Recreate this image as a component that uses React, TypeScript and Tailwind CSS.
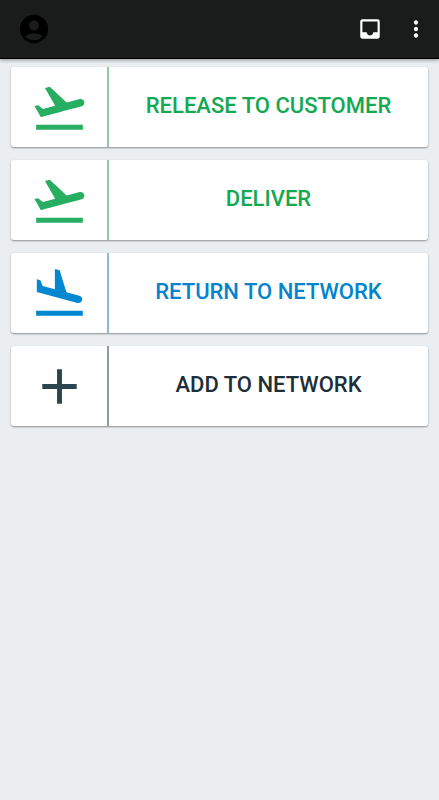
import type { IconType } from 'react-icons'
import { MdAccountCircle, MdAdd, MdFlightLand, MdFlightTakeoff, MdInbox, MdMoreVert } from 'react-icons/md'

type Action = {
  label: string
  icon: IconType
  iconColor: string
  textColor: string
  divider: string
}

const actions: Action[] = [
  {
    label: 'Release to customer',
    icon: MdFlightTakeoff,
    iconColor: 'text-[#27ae60]',
    textColor: 'text-[#14a851]',
    divider: 'border-[#8fcaa8]',
  },
  {
    label: 'Deliver',
    icon: MdFlightTakeoff,
    iconColor: 'text-[#27ae60]',
    textColor: 'text-[#14a851]',
    divider: 'border-[#8fcaa8]',
  },
  {
    label: 'Return to network',
    icon: MdFlightLand,
    iconColor: 'text-[#0288d1]',
    textColor: 'text-[#0284cf]',
    divider: 'border-[#8ab9d9]',
  },
  {
    label: 'Add to network',
    icon: MdAdd,
    iconColor: 'text-[#2c444f]',
    textColor: 'text-[#1c2f3a]',
    divider: 'border-[#949b9e]',
  },
]

function ActionCard({ label, icon: Icon, iconColor, textColor, divider }: Action) {
  return (
    <button
      type="button"
      className="flex h-20 w-full items-stretch rounded-[3px] bg-white shadow-[0_1px_2px_rgba(0,0,0,0.4)]"
    >
      <span className={`flex w-[98px] shrink-0 items-center justify-center border-r-2 ${divider} ${iconColor}`}>
        <Icon size={59} aria-hidden="true" />
      </span>
      <span className={`flex flex-1 items-center justify-center pb-1 text-[22px] font-medium uppercase ${textColor}`}>
        {label}
      </span>
    </button>
  )
}

export default function App() {
  return (
    <div className="min-h-screen bg-[#eaeef1] font-[Roboto,sans-serif]">
      <header className="flex h-[59px] items-center justify-between border-b border-black bg-[#1a1c1b] pr-[10px] pl-[17px] shadow-[0_1px_4px_rgba(0,0,0,0.4)]">
        <button type="button" aria-label="Account" className="text-black">
          <MdAccountCircle size={34} />
        </button>
        <div className="flex items-center gap-5 text-white">
          <button type="button" aria-label="Inbox">
            <MdInbox size={26} />
          </button>
          <button type="button" aria-label="More options">
            <MdMoreVert size={26} />
          </button>
        </div>
      </header>
      <main className="flex flex-col gap-[13px] px-[11px] pt-2">
        {actions.map((action) => (
          <ActionCard key={action.label} {...action} />
        ))}
      </main>
    </div>
  )
}
